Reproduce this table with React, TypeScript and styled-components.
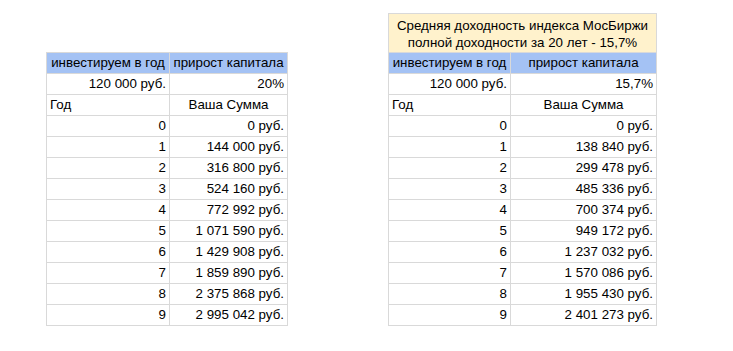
import styled, { createGlobalStyle } from "styled-components";

const GlobalStyle = createGlobalStyle`
  body {
    margin: 0;
    background: #ffffff;
    font-family: "Liberation Sans", Arial, sans-serif;
  }
`;

type Align = "left" | "center" | "right";

const Page = styled.main`
  display: flex;
  align-items: flex-end;
  gap: 100px;
  padding: 13px 0 0 46px;
`;

const Sheet = styled.table`
  border-collapse: collapse;
  table-layout: fixed;
  font-size: 13.33px;
  color: #000000;
`;

const Cell = styled.td<{ $align?: Align; $bg?: string }>`
  height: 20px;
  padding: 0 3px;
  line-height: 18px;
  border: 1px solid #d9d9d9;
  text-align: ${({ $align = "right" }) => $align};
  background: ${({ $bg = "transparent" }) => $bg};
  white-space: nowrap;
  overflow: hidden;
`;

const TitleCell = styled(Cell)`
  height: 37px;
  line-height: 17px;
  white-space: normal;
  padding: 1px 3px 0;
`;

const HEADER_BG = "#a4c2f4";
const TITLE_BG = "#fff2cc";

type SheetData = {
  title?: string[];
  widths: [number, number];
  rate: string;
  sums: string[];
};

const left: SheetData = {
  widths: [123, 118],
  rate: "20%",
  sums: [
    "0 руб.",
    "144 000 руб.",
    "316 800 руб.",
    "524 160 руб.",
    "772 992 руб.",
    "1 071 590 руб.",
    "1 429 908 руб.",
    "1 859 890 руб.",
    "2 375 868 руб.",
    "2 995 042 руб.",
  ],
};

const right: SheetData = {
  title: ["Средняя доходность индекса МосБиржи", "полной доходности за 20 лет - 15,7%"],
  widths: [122, 146],
  rate: "15,7%",
  sums: [
    "0 руб.",
    "138 840 руб.",
    "299 478 руб.",
    "485 336 руб.",
    "700 374 руб.",
    "949 172 руб.",
    "1 237 032 руб.",
    "1 570 086 руб.",
    "1 955 430 руб.",
    "2 401 273 руб.",
  ],
};

function Calculator({ data }: { data: SheetData }) {
  return (
    <Sheet>
      <colgroup>
        <col style={{ width: data.widths[0] }} />
        <col style={{ width: data.widths[1] }} />
      </colgroup>
      <tbody>
        {data.title && (
          <tr>
            <TitleCell colSpan={2} $align="center" $bg={TITLE_BG}>
              {data.title[0]}
              <br />
              {data.title[1]}
            </TitleCell>
          </tr>
        )}
        <tr>
          <Cell $align="center" $bg={HEADER_BG}>инвестируем в год</Cell>
          <Cell $align="center" $bg={HEADER_BG}>прирост капитала</Cell>
        </tr>
        <tr>
          <Cell>120 000 руб.</Cell>
          <Cell>{data.rate}</Cell>
        </tr>
        <tr>
          <Cell $align="left">Год</Cell>
          <Cell $align="center">Ваша Сумма</Cell>
        </tr>
        {data.sums.map((sum, year) => (
          <tr key={year}>
            <Cell>{year}</Cell>
            <Cell>{sum}</Cell>
          </tr>
        ))}
      </tbody>
    </Sheet>
  );
}

export default function App() {
  return (
    <>
      <GlobalStyle />
      <Page>
        <Calculator data={left} />
        <Calculator data={right} />
      </Page>
    </>
  );
}
